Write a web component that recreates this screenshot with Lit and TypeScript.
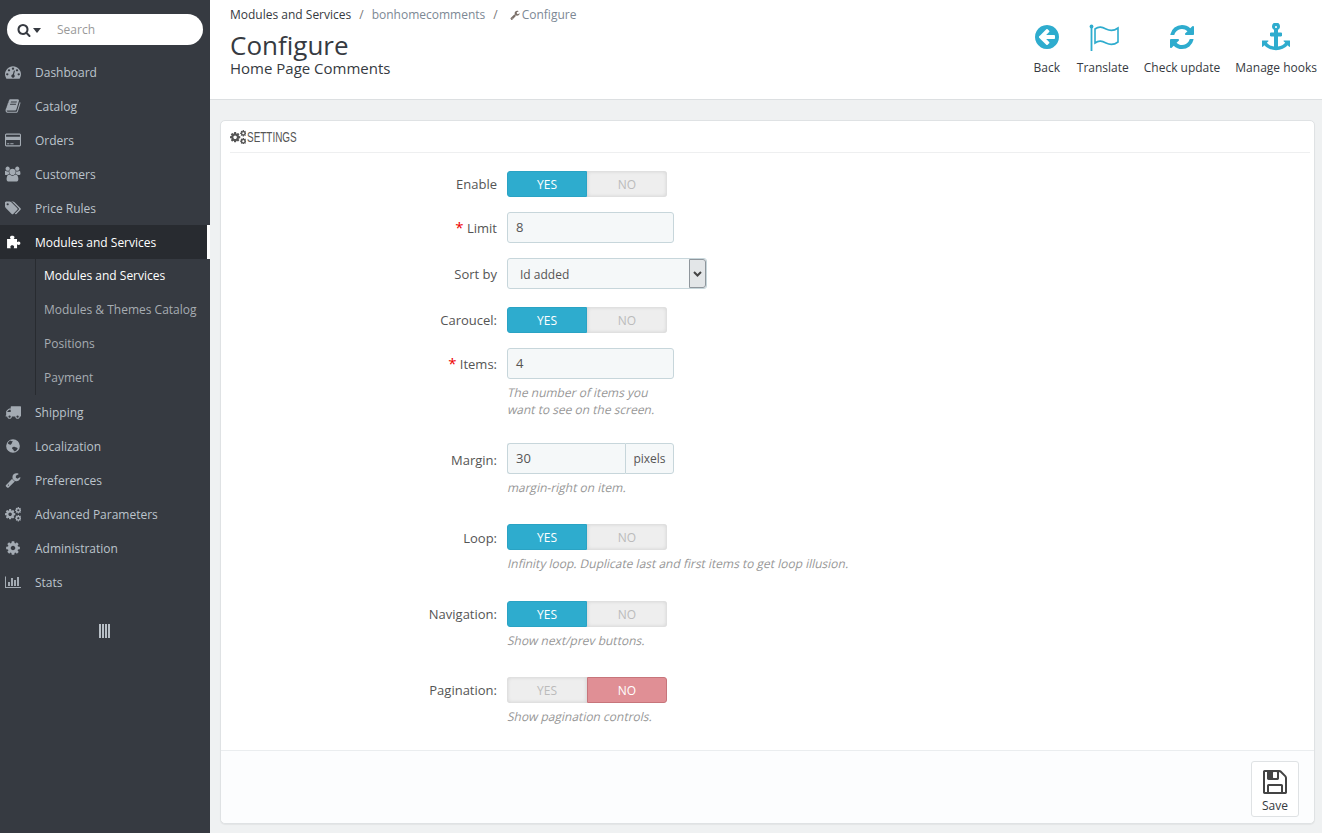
import { LitElement, html, css, svg } from "lit";
import { customElement } from "lit/decorators.js";

const P: Record<string, [string, string]> = {
  search: ["0 0 1792 1792", "M1216 832q0-185-131.5-316.5t-316.5-131.5-316.5 131.5-131.5 316.5 131.5 316.5 316.5 131.5 316.5-131.5 131.5-316.5zm512 832q0 52-38 90t-90 38q-54 0-90-38l-343-342q-179 124-399 124-143 0-273.5-55.5t-225-150-150-225-55.5-273.5 55.5-273.5 150-225 225-150 273.5-55.5 273.5 55.5 225 150 150 225 55.5 273.5q0 220-124 399l343 343q37 37 37 90z"],
  wrench: ["0 0 1792 1792", "M448 1472q0-26-19-45t-45-19-45 19-19 45 19 45 45 19 45-19 19-45zm644-420l-682 682q-37 37-90 37-52 0-91-37l-106-108q-38-36-38-90 0-53 38-91l681-681q39 98 114.5 173.5t173.5 114.5zm634-435q0 39-23 106-47 134-164.5 217.5t-258.5 83.5q-185 0-316.5-131.5t-131.5-316.5 131.5-316.5 316.5-131.5q58 0 121.5 16.5t107.5 46.5q16 11 16 28t-16 28l-293 169v224l193 107q5-3 79-48.5t135.5-81 70.5-35.5q15 0 23.5 10t8.5 25z"],
  back: ["0 0 1792 1792", "M1408 960v-128q0-26-19-45t-45-19h-502l189-189q19-19 19-45t-19-45l-91-91q-18-18-45-18t-45 18l-362 362-91 91q-18 18-18 45t18 45l91 91 362 362q18 18 45 18t45-18l91-91q18-18 18-45t-18-45l-189-189h502q26 0 45-19t19-45zm256-64q0 209-103 385.5t-279.5 279.5-385.5 103-385.5-103-279.5-279.5-103-385.5 103-385.5 279.5-279.5 385.5-103 385.5 103 279.5 279.5 103 385.5z"],
  refresh: ["0 0 1792 1792", "M1639 1056q0 5-1 7-64 268-268 434.5t-478 166.5q-146 0-282.5-55t-243.5-157l-129 129q-19 19-45 19t-45-19-19-45v-448q0-26 19-45t45-19h448q26 0 45 19t19 45-19 45l-137 137q71 66 161 102t187 36q134 0 250-65t186-179q11-17 53-117 8-23 30-23h192q13 0 22.5 9.5t9.5 22.5zm25-800v448q0 26-19 45t-45 19h-448q-26 0-45-19t-19-45 19-45l138-138q-148-137-349-137-134 0-250 65t-186 179q-11 17-53 117-8 23-30 23h-199q-13 0-22.5-9.5t-9.5-22.5v-7q65-268 270-434.5t480-166.5q146 0 284 55.5t245 156.5l130-129q19-19 45-19t45 19 19 45z"],
  anchor: ["0 0 1792 1792", "M960 256q0-26-19-45t-45-19-45 19-19 45 19 45 45 19 45-19 19-45zm832 888v352q0 22-20 30-8 2-12 2-12 0-23-9l-93-93q-119 143-318.5 226.5t-429.5 83.5-429.5-83.5-318.5-226.5l-93 93q-9 9-23 9-4 0-12-2-20-8-20-30v-352q0-14 9-23t23-9h352q22 0 30 20 8 19-7 35l-100 100q67 91 189.5 153.5t271.5 82.5v-647h-192q-26 0-45-19t-19-45v-128q0-26 19-45t45-19h192v-163q-58-34-93-92.5t-35-128.5q0-106 75-181t181-75 181 75 75 181q0 70-35 128.5t-93 92.5v163h192q26 0 45 19t19 45v128q0 26-19 45t-45 19h-192v647q149-20 271.5-82.5t189.5-153.5l-100-100q-15-16-7-35 8-20 30-20h352q14 0 23 9t9 23z"],
  save: ["0 0 1792 1792", "M512 1536h768v-384h-768v384zm896 0h128v-896q0-14-10-38.5t-20-34.5l-281-281q-10-10-34-20t-39-10v416q0 40-28 68t-68 28h-576q-40 0-68-28t-28-68v-416h-128v1280h128v-416q0-40 28-68t68-28h832q40 0 68 28t28 68v416zm-384-928v-320q0-13-9.5-22.5t-22.5-9.5h-192q-13 0-22.5 9.5t-9.5 22.5v320q0 13 9.5 22.5t22.5 9.5h192q13 0 22.5-9.5t9.5-22.5zm640 32v928q0 40-28 68t-68 28h-1344q-40 0-68-28t-28-68v-1344q0-40 28-68t68-28h928q40 0 88 20t76 48l280 280q28 28 48 76t20 88z"],
  book: ["0 0 1792 1792", "M1703 478q40 57 18 129l-275 906q-19 64-76.5 107.5t-122.5 43.5h-923q-77 0-148.5-53.5t-99.5-131.5q-24-67-2-127 0-4 3-27t4-37q1-8-3-21.5t-3-19.5q2-11 8-21t16.5-23.5 16.5-23.5q23-38 45-91.5t30-91.5q3-10 .5-30t-.5-28q3-11 17-28t17-23q21-36 42-92t25-90q1-9-2.5-32t.5-28q4-13 22-30.5t22-22.5q19-26 42.5-84.5t27.5-96.5q1-8-3-25.5t-2-26.5q2-8 9-18t18-23 17-21q8-12 16.5-30.5t15-35 16-36 19.5-32 26.5-23.5 36-11.5 47.5 5.5l-1 3q38-9 51-9h761q74 0 114 56t18 130l-274 906q-36 119-71.5 153.5t-128.5 34.5h-869q-27 0-38 15-11 16-1 43 24 70 144 70h923q29 0 56-15.5t35-41.5l300-987q7-22 5-57 38 15 59 43zm-1064 2q-4 13 2 22.5t20 9.5h608q13 0 25.5-9.5t16.5-22.5l21-64q4-13-2-22.5t-20-9.5h-608q-13 0-25.5 9.5t-16.5 22.5zm-83 256q-4 13 2 22.5t20 9.5h608q13 0 25.5-9.5t16.5-22.5l21-64q4-13-2-22.5t-20-9.5h-608q-13 0-25.5 9.5t-16.5 22.5z"],
  dash: ["0 0 1792 1792", "M384 1152q0-53-37.5-90.5t-90.5-37.5-90.5 37.5-37.5 90.5 37.5 90.5 90.5 37.5 90.5-37.5 37.5-90.5zm192-448q0-53-37.5-90.5t-90.5-37.5-90.5 37.5-37.5 90.5 37.5 90.5 90.5 37.5 90.5-37.5 37.5-90.5zm428 481l101-382q6-26-7.5-48.5t-38.5-29.5-48 6.5-30 39.5l-101 382q-60 5-107 43.5t-63 98.5q-20 77 20 146t117 89 146-20 89-117q16-60-6-117t-72-91zm660-33q0-53-37.5-90.5t-90.5-37.5-90.5 37.5-37.5 90.5 37.5 90.5 90.5 37.5 90.5-37.5 37.5-90.5zm-640-640q0-53-37.5-90.5t-90.5-37.5-90.5 37.5-37.5 90.5 37.5 90.5 90.5 37.5 90.5-37.5 37.5-90.5zm448 192q0-53-37.5-90.5t-90.5-37.5-90.5 37.5-37.5 90.5 37.5 90.5 90.5 37.5 90.5-37.5 37.5-90.5zm320 448q0 261-141 483-19 29-54 29h-1402q-35 0-54-29-141-221-141-483 0-182 71-348t191-286 286-191 348-71 348 71 286 191 191 286 71 348z"],
  card: ["0 0 1920 1792", "M1760 128q66 0 113 47t47 113v1216q0 66-47 113t-113 47h-1600q-66 0-113-47t-47-113v-1216q0-66 47-113t113-47h1600zm-1600 128q-13 0-22.5 9.5t-9.5 22.5v224h1664v-224q0-13-9.5-22.5t-22.5-9.5h-1600zm1600 1280q13 0 22.5-9.5t9.5-22.5v-608h-1664v608q0 13 9.5 22.5t22.5 9.5h1600zm-1504-128v-128h256v128h-256zm384 0v-128h384v128h-384z"],
  group: ["0 0 1920 1792", "M529 896q-162 5-265 128h-134q-82 0-138-40.5t-56-118.5q0-353 124-353 6 0 43.5 21t97.5 42.5 119 21.5q67 0 133-23-5 37-5 66 0 139 81 256zm1071 637q0 120-73 189.5t-194 69.5h-874q-121 0-194-69.5t-73-189.5q0-53 3.5-103.5t14-109 26.5-108.5 43-97.5 62-81 85.5-53.5 111.5-20q10 0 43 21.5t73 48 107 48 135 21.5 135-21.5 107-48 73-48 43-21.5q61 0 111.5 20t85.5 53.5 62 81 43 97.5 26.5 108.5 14 109 3.5 103.5zm-1024-1277q0 106-75 181t-181 75-181-75-75-181 75-181 181-75 181 75 75 181zm704 384q0 159-112.5 271.5t-271.5 112.5-271.5-112.5-112.5-271.5 112.5-271.5 271.5-112.5 271.5 112.5 112.5 271.5zm576 225q0 78-56 118.5t-138 40.5h-134q-103-123-265-128 81-117 81-256 0-29-5-66 66 23 133 23 59 0 119-21.5t97.5-42.5 43.5-21q124 0 124 353zm-128-609q0 106-75 181t-181 75-181-75-75-181 75-181 181-75 181 75 75 181z"],
  tags: ["0 0 1920 1792", "M448 448q0-53-37.5-90.5t-90.5-37.5-90.5 37.5-37.5 90.5 37.5 90.5 90.5 37.5 90.5-37.5 37.5-90.5zm1067 576q0 53-37 90l-491 492q-39 37-91 37-53 0-90-37l-715-716q-38-37-64.5-101t-26.5-117v-416q0-52 38-90t90-38h416q53 0 117 26.5t102 64.5l715 714q37 39 37 91zm384 0q0 53-37 90l-491 492q-39 37-91 37-36 0-59-14t-53-45l470-470q37-37 37-90 0-52-37-91l-715-714q-38-38-102-64.5t-117-26.5h224q53 0 117 26.5t102 64.5l715 714q37 39 37 91z"],
  puzzle: ["0 0 1792 1792", "M230 560h420c-60-70-90-130-90-200 0-110 110-170 250-170s250 60 250 170c0 70-30 130-90 200h380v360c60-50 120-70 190-70 110 0 180 90 180 190s-70 190-180 190c-70 0-130-20-190-70v440h-380c30-60 50-110 50-160 0-100-90-170-210-170s-210 70-210 170c0 50 20 100 50 160h-420z"],
  truck: ["0 0 1792 1792", "M640 1408q0-52-38-90t-90-38-90 38-38 90 38 90 90 38 90-38 38-90zm-384-512h384v-256h-158q-13 0-22 9l-195 195q-9 9-9 22v30zm1280 512q0-52-38-90t-90-38-90 38-38 90 38 90 90 38 90-38 38-90zm256-1088v1024q0 15-4 26.5t-13.5 18.5-16.5 11.5-23.5 6-22.5 2-25.5 0-22.5-.5q0 106-75 181t-181 75-181-75-75-181h-384q0 106-75 181t-181 75-181-75-75-181h-64q-3 0-22.5.5t-25.5 0-22.5-2-23.5-6-16.5-11.5-13.5-18.5-4-26.5q0-26 19-45t45-19v-320q0-8-.5-35t0-38 2.5-34.5 6.5-37 14-30.5 22.5-30l198-198q19-19 50.5-32t58.5-13h160v-192q0-26 19-45t45-19h1024q26 0 45 19t19 45z"],
  globe: ["0 0 1792 1792", "M896 128a768 768 0 1 0 0 1536 768 768 0 0 0 0-1536zM620 760c-130-40-250-90-310-210 70-130 180-220 320-270 40 70 120 90 190 60 60 60 20 130-40 170 20 80-50 160-160 250zm520 720c-120 20-190-70-200-170-90-30-170-100-140-210 60-100 190-130 310-90 110 20 230 60 310 150-40 170-140 270-280 320z"],
  cog: ["0 0 1792 1792", "M1152 896q0-106-75-181t-181-75-181 75-75 181 75 181 181 75 181-75 75-181zm512-109v222q0 12-8 23t-20 13l-185 28q-19 54-39 91 35 50 107 138 10 12 10 25t-9 23q-27 37-99 108t-94 71q-12 0-26-9l-138-108q-44 23-91 38-16 136-29 186-7 28-36 28h-222q-14 0-24.5-8.5t-11.5-21.5l-28-184q-49-16-90-37l-141 107q-10 9-25 9-14 0-25-11-126-114-165-168-7-10-7-23 0-12 8-23 15-21 51-66.5t54-70.5q-27-50-41-99l-183-27q-13-2-21-12.5t-8-23.5v-222q0-12 8-23t19-13l186-28q14-46 39-92-40-57-107-138-10-12-10-24 0-10 9-23 26-36 98.5-107.5t94.5-71.5q13 0 26 10l138 107q44-23 91-38 16-136 29-186 7-28 36-28h222q14 0 24.5 8.5t11.5 21.5l28 184q49 16 90 37l142-107q9-9 24-9 13 0 25 10 129 119 165 170 7 8 7 22 0 12-8 23-15 21-51 66.5t-54 70.5q26 50 41 98l183 28q13 2 21 12.5t8 23.5z"],
  chart: ["0 0 2048 1792", "M640 896v512h-256v-512h256zm384-512v1024h-256v-1024h256zm1024 1152v128h-2048v-1472h128v1344h1920zm-640-896v768h-256v-768h256zm384-384v1152h-256v-1152h256z"],
};

const icon = (name: string) => {
  if (name === "cogs") {
    return html`<svg class="ic" viewBox="100 160 1720 1500" fill="currentColor" aria-hidden="true">
      <svg x="0" y="280" width="1300" height="1300" viewBox="0 0 1792 1792"><path fill-rule="evenodd" d=${P.cog[1]}></path></svg>
      <svg x="1130" y="110" width="800" height="800" viewBox="0 0 1792 1792"><path fill-rule="evenodd" d=${P.cog[1]}></path></svg>
      <svg x="1130" y="960" width="800" height="800" viewBox="0 0 1792 1792"><path fill-rule="evenodd" d=${P.cog[1]}></path></svg>
    </svg>`;
  }
  const [vb, d] = P[name];
  return html`<svg class="ic" viewBox=${vb} fill="currentColor" aria-hidden="true">${svg`<path fill-rule="evenodd" d=${d}></path>`}</svg>`;
};

const NAV: [string, string][] = [
  ["dash", "Dashboard"],
  ["book", "Catalog"],
  ["card", "Orders"],
  ["group", "Customers"],
  ["tags", "Price Rules"],
];
const NAV2: [string, string][] = [
  ["truck", "Shipping"],
  ["globe", "Localization"],
  ["wrench", "Preferences"],
  ["cogs", "Advanced Parameters"],
  ["cog", "Administration"],
  ["chart", "Stats"],
];

@customElement("app-root")
export class AppRoot extends LitElement {
  static styles = css`
    :host {
      display: flex;
      width: 100%;
      height: 100vh;
      overflow: hidden;
      font-family: "Open Sans", "Liberation Sans", sans-serif;
      font-size: 13px;
      color: #555;
      background: #eff1f2;
    }
    * { box-sizing: border-box; }
    .ic { display: block; width: 100%; height: 100%; }

    .side {
      width: 210px;
      flex: none;
      background: #363a41;
      display: flex;
      flex-direction: column;
      padding-top: 14px;
      color: #bcc4cc;
      font-size: 12px;
    }
    .search {
      margin: 0 7px 10px;
      height: 31px;
      border-radius: 16px;
      background: #fff;
      display: flex;
      align-items: center;
      padding-left: 10px;
      color: #363a41;
    }
    .search .mag { width: 14px; height: 14px; }
    .search .caret {
      width: 0; height: 0; margin-left: 2px; margin-top: 1px;
      border-left: 4.5px solid transparent;
      border-right: 4.5px solid transparent;
      border-top: 5px solid #363a41;
    }
    .search span { margin-left: 16px; color: #999; font-size: 12px; }
    .item {
      height: 34px;
      display: flex;
      align-items: center;
      padding-left: 35px;
      position: relative;
      white-space: nowrap;
    }
    .item .nic {
      position: absolute;
      left: 5px;
      top: 9px;
      width: 16px;
      height: 16px;
      color: #a4abb3;
    }
    .item.active { background: #282b30; color: #fff; border-right: 3px solid #fff; }
    .item.active .nic { color: #fff; }
    .sub {
      margin-left: 35px;
      border-left: 1px solid #282b30;
      padding: 0 0 0 8px;
    }
    .sub div {
      height: 34px;
      padding-bottom: 2px;
      display: flex;
      align-items: center;
      color: #a6acb2;
      white-space: nowrap;
    }
    .sub div.on { color: #fff; }
    .collapse {
      margin: 25px 0 0 99px;
      width: 11px;
      height: 14px;
      background: repeating-linear-gradient(90deg, #b8bfc6 0 2px, transparent 2px 3px);
    }

    .main { flex: 1; min-width: 0; display: flex; flex-direction: column; }
    .head {
      height: 100px;
      background: #fff;
      border-bottom: 1px solid #dcdfe1;
      display: flex;
      justify-content: space-between;
      padding: 0 5px 0 20px;
      flex: none;
    }
    .crumbs {
      display: flex;
      padding-top: 7px;
      font-size: 12px;
      line-height: 16px;
      color: #7c8894;
      white-space: nowrap;
    }
    .crumbs .first { color: #363a41; }
    .crumbs .sep { margin: 0 8px; color: #777; }
    .crumbs .sep.last { margin-right: 12px; }
    .crumbs .wr { width: 10px; height: 10px; margin: 3px 2px 0 0; color: #7a6f68; }
    h1 {
      margin: 7px 0 0;
      font-weight: 400;
      font-size: 26px;
      line-height: 30px;
      color: #363a41;
    }
    h2 {
      margin: 0;
      font-weight: 400;
      font-size: 15px;
      line-height: 16px;
      color: #363a41;
    }
    .tools { display: flex; padding-top: 23px; }
    .tool {
      display: flex;
      flex-direction: column;
      align-items: center;
      font-size: 12px;
      color: #363a41;
      white-space: nowrap;
      margin-left: 15px;
    }
    .tool:first-child { margin-right: 1px; margin-left: 0; }
    .tool .t-ic { height: 28px; width: 28px; color: #2eacce; }
    .tool .t-ic.flag { width: 32px; }
    .tool span { margin-top: 8px; line-height: 17px; }

    .content { flex: 1; padding: 20px 7px 9px 10px; min-height: 0; }
    .panel {
      height: 100%;
      background: #fff;
      border: 1px solid #dfe2e4;
      border-radius: 5px;
      display: flex;
      flex-direction: column;
      box-shadow: 0 1px 1px rgba(0,0,0,.05);
    }
    .p-head {
      margin: 0 4px 0 9px;
      height: 32px;
      border-bottom: 1px solid #eeeff0;
      display: flex;
      align-items: center;
      color: #555;
      flex: none;
    }
    .p-head i { width: 16px; height: 14px; margin-right: 1px; color: #555; }
    .p-head span {
      display: inline-block;
      font-family: "Liberation Sans", sans-serif;
      font-size: 14px;
      transform: scaleX(0.71);
      transform-origin: 0 50%;
    }
    .form { flex: 1; padding-top: 18px; }
    .row { display: flex; align-items: flex-start; margin-bottom: 15px; }
    .row.g18 { margin-bottom: 18px; }
    .row.g25 { margin-bottom: 25px; }
    .row.g28 { margin-bottom: 28px; }
    .row.g29 { margin-bottom: 29px; }
    label {
      width: 276px;
      flex: none;
      text-align: right;
      line-height: 18px;
      padding-top: 4px;
      margin-right: 10px;
      color: #555;
      white-space: nowrap;
    }
    label.low { padding-top: 5px; }
    label.req { padding-top: 6px; }
    label.tall { padding-top: 7px; }
    label.taller { padding-top: 8px; }
    label b { color: #e00; font-weight: 400; font-size: 15px; }
    .switch { display: flex; width: 160px; height: 26px; font-size: 12px; }
    .switch div {
      width: 80px;
      display: flex;
      align-items: center;
      justify-content: center;
      background: #eee;
      color: #bbb;
      box-shadow: inset 0 0 4px rgba(0,0,0,.14);
    }
    .switch div:first-child { border-radius: 3px 0 0 3px; }
    .switch div:last-child { border-radius: 0 3px 3px 0; }
    .switch div.yes {
      background: #2eacce;
      color: #fff;
      box-shadow: none;
      border: 1px solid #2aa3c4;
    }
    .switch div.no {
      background: #e08f95;
      color: #fff;
      box-shadow: none;
      border: 1px solid #c7757b;
    }
    .input {
      height: 31px;
      width: 167px;
      background: #f5f8f9;
      border: 1px solid #c7d6db;
      border-radius: 3px;
      padding: 0 0 1px 8px;
      display: flex;
      align-items: center;
      color: #555;
    }
    .select {
      width: 200px;
      padding: 0 0 0 12px;
      justify-content: space-between;
      color: #555;
      font-size: 12px;
    }
    .select .txt { padding-top: 1px; }
    .select .btn {
      width: 17px;
      height: 29px;
      background: #e3e6e8;
      border: 1px solid #8f969c;
      border-radius: 0 3px 3px 0;
      display: flex;
      align-items: center;
      justify-content: center;
    }
    .select svg { width: 9px; height: 6px; display: block; }
    .group { display: flex; width: 167px; height: 31px; }
    .group .input { width: 118px; border-radius: 3px 0 0 3px; border-right: 0; }
    .group .addon {
      flex: 1;
      background: #f5f8f9;
      border: 1px solid #c7d6db;
      border-radius: 0 3px 3px 0;
      display: flex;
      align-items: center;
      justify-content: center;
      font-size: 12px;
      color: #555;
    }
    .help {
      margin-top: 5px;
      font-size: 12px;
      line-height: 17px;
      color: #979797;
      white-space: nowrap;
    }
    .help div { transform: skewX(-13deg); transform-origin: 0 75%; }
    .foot {
      height: 73px;
      flex: none;
      background: #fcfdfe;
      border-top: 1px solid #eaedef;
      border-radius: 0 0 5px 5px;
      display: flex;
      justify-content: flex-end;
      padding: 10px 15px 0 0;
    }
    .save {
      width: 48px;
      height: 56px;
      background: #fff;
      border: 1px solid #dfe2e4;
      border-radius: 3px;
      display: flex;
      flex-direction: column;
      align-items: center;
      padding-top: 6px;
      font-size: 12px;
      color: #363a41;
      line-height: 17px;
    }
    .save i { width: 28px; height: 28px; margin-bottom: 1px; color: #444; }
  `;

  private sw(on: boolean) {
    return html`<div class="switch">
      <div class=${on ? "yes" : ""}>YES</div>
      <div class=${on ? "" : "no"}>NO</div>
    </div>`;
  }

  render() {
    const navItem = (n: [string, string], cls = "") =>
      html`<div class="item ${cls}"><i class="nic">${icon(n[0])}</i>${n[1]}</div>`;
    return html`
      <aside class="side">
        <div class="search">
          <i class="mag">${icon("search")}</i><i class="caret"></i><span>Search</span>
        </div>
        ${NAV.map((n) => navItem(n))}
        ${navItem(["puzzle", "Modules and Services"], "active")}
        <div class="sub">
          <div class="on">Modules and Services</div>
          <div>Modules &amp; Themes Catalog</div>
          <div>Positions</div>
          <div>Payment</div>
        </div>
        ${NAV2.map((n) => navItem(n))}
        <div class="collapse"></div>
      </aside>
      <div class="main">
        <header class="head">
          <div>
            <div class="crumbs">
              <span class="first">Modules and Services</span><span class="sep">/</span>
              <span>bonhomecomments</span><span class="sep last">/</span>
              <i class="wr">${icon("wrench")}</i><span>Configure</span>
            </div>
            <h1>Configure</h1>
            <h2>Home Page Comments</h2>
          </div>
          <div class="tools">
            <div class="tool"><i class="t-ic">${icon("back")}</i><span>Back</span></div>
            <div class="tool">
              <i class="t-ic flag">
                <svg class="ic" viewBox="0 0 32 28" fill="none" stroke="currentColor" stroke-width="1.6">
                  <path d="M4.5 4v24" stroke-width="1.8"></path>
                  <circle cx="4.5" cy="3.5" r="1.9" fill="currentColor" stroke="none"></circle>
                  <path d="M8 6c4-3 7-2 11 0s8 2 12-1v14c-4 3-8 3-12 1s-7-3-11 0z"></path>
                </svg>
              </i><span>Translate</span>
            </div>
            <div class="tool"><i class="t-ic">${icon("refresh")}</i><span>Check update</span></div>
            <div class="tool"><i class="t-ic">${icon("anchor")}</i><span>Manage hooks</span></div>
          </div>
        </header>
        <div class="content">
          <section class="panel">
            <div class="p-head"><i>${icon("cogs")}</i><span>SETTINGS</span></div>
            <div class="form">
              <div class="row"><label>Enable</label>${this.sw(true)}</div>
              <div class="row"><label class="req"><b>*</b> Limit</label><div class="input">8</div></div>
              <div class="row g18">
                <label class="tall">Sort by</label>
                <div class="input select"><span class="txt">Id added</span>
                  <span class="btn"><svg viewBox="0 0 9 6" fill="none" stroke="#444" stroke-width="2"><path d="M1 1l3.5 3.5L8 1"></path></svg></span>
                </div>
              </div>
              <div class="row"><label>Caroucel:</label>${this.sw(true)}</div>
              <div class="row g25">
                <label class="req"><b>*</b> Items:</label>
                <div><div class="input">4</div><div class="help"><div>The number of items you</div><div>want to see on the screen.</div></div></div>
              </div>
              <div class="row g28">
                <label class="taller">Margin:</label>
                <div>
                  <div class="group"><div class="input">30</div><div class="addon">pixels</div></div>
                  <div class="help"><div>margin-right on item.</div></div>
                </div>
              </div>
              <div class="row g29">
                <label class="low">Loop:</label>
                <div>${this.sw(true)}<div class="help"><div>Infinity loop. Duplicate last and first items to get loop illusion.</div></div></div>
              </div>
              <div class="row g28">
                <label>Navigation:</label>
                <div>${this.sw(true)}<div class="help"><div>Show next/prev buttons.</div></div></div>
              </div>
              <div class="row">
                <label>Pagination:</label>
                <div>${this.sw(false)}<div class="help"><div>Show pagination controls.</div></div></div>
              </div>
            </div>
            <div class="foot">
              <div class="save"><i>${icon("save")}</i>Save</div>
            </div>
          </section>
        </div>
      </div>
    `;
  }
}
